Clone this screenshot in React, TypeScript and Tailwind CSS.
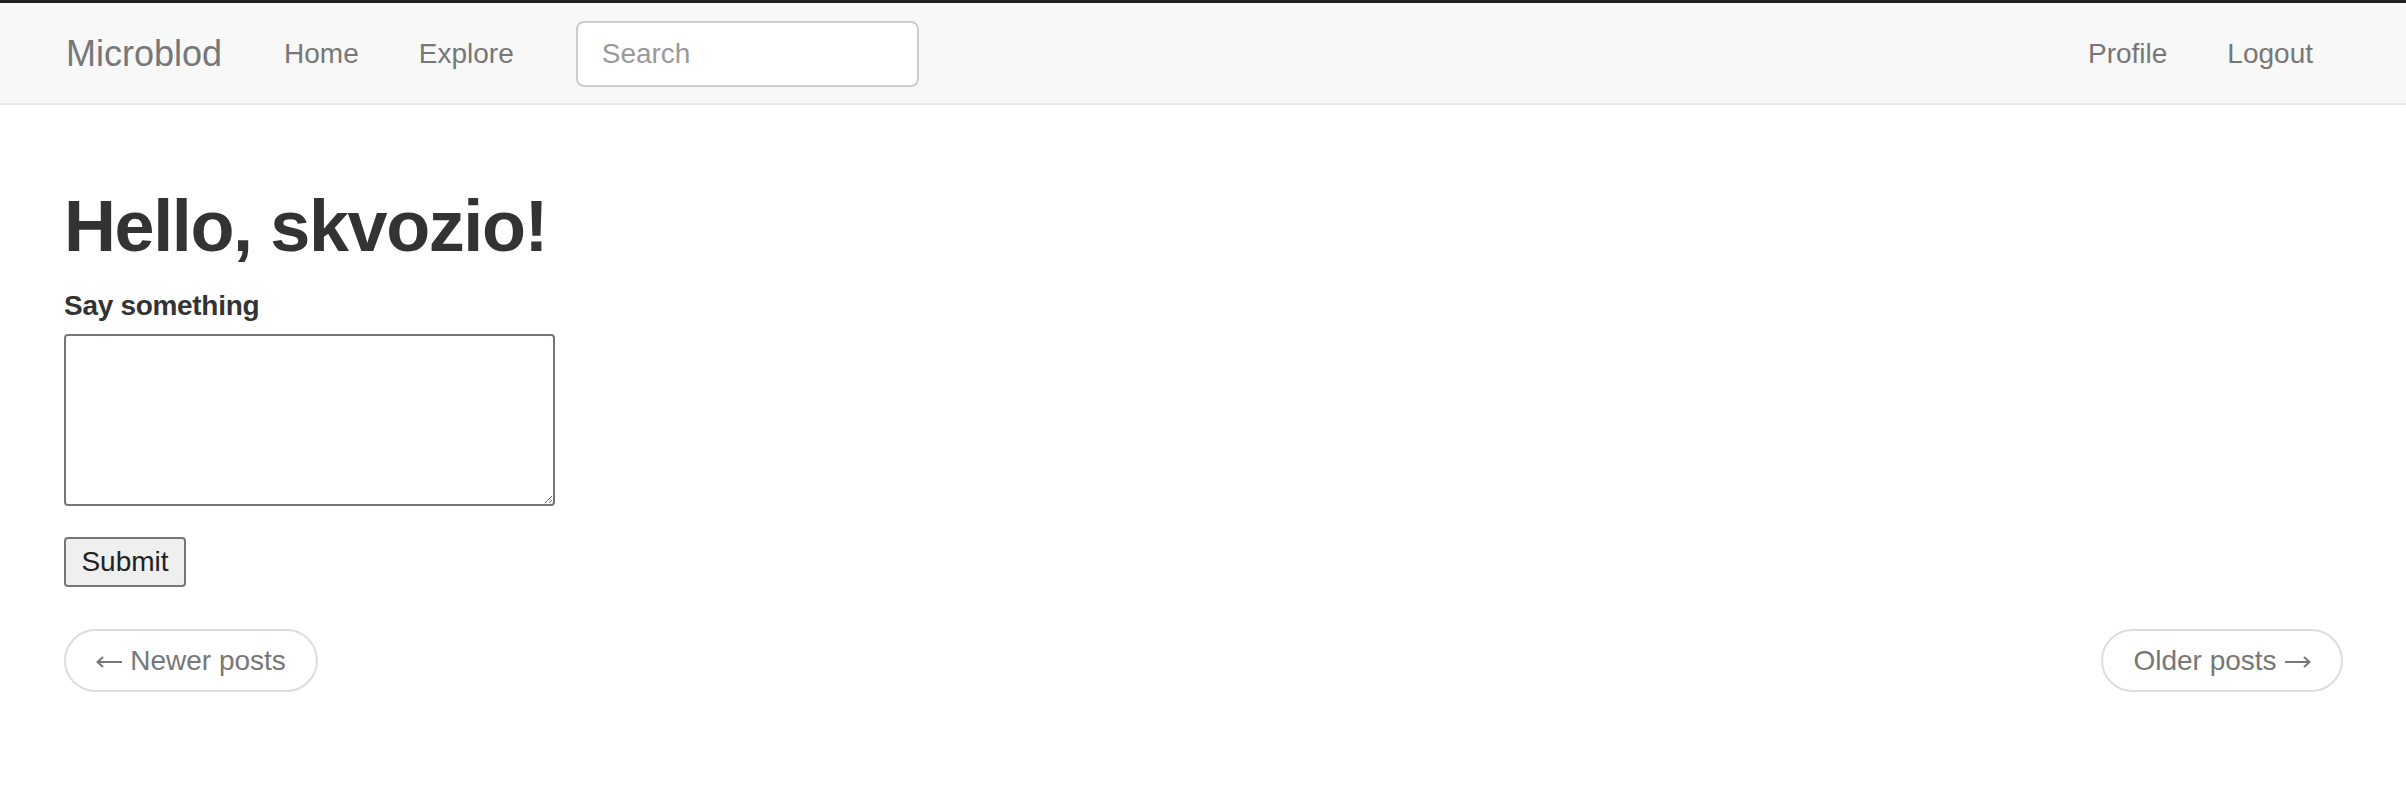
import React from "react"

const font = "font-['Liberation_Sans','Helvetica_Neue',Arial,sans-serif]"

const NavLink = ({ label }: { label: string }) => (
  <a href="#" className="px-[30px] text-[28px] leading-[40px] text-[#777]">
    {label}
  </a>
)

// thin long arrow, like the system glyph in the screenshot
const Arrow = ({ dir }: { dir: "left" | "right" }) => (
  <svg
    width="27"
    height="12"
    viewBox="0 0 27 12"
    className={`mt-[3px] shrink-0 ${dir === "right" ? "rotate-180" : ""}`}
    fill="none"
    stroke="#777"
    strokeWidth="2"
  >
    <path d="M1.5 6H26" />
    <path d="M7 1L1.5 6L7 11" strokeLinejoin="miter" />
  </svg>
)

export default function App() {
  return (
    <div className={`min-h-[794px] bg-white ${font}`}>
      <div className="h-[3px] bg-[#222]" />
      <nav className="flex h-[102px] items-center justify-between border-b-2 border-[#e7e7e7] bg-[#f8f8f8] pl-[36px] pr-[63px] pt-[2px]">
        <div className="flex items-center">
          <a href="#" className="pl-[30px] pr-[32px] text-[36px] leading-[40px] text-[#777]">
            Microblod
          </a>
          <NavLink label="Home" />
          <NavLink label="Explore" />
          <form className="pl-[32px]">
            <input
              placeholder="Search"
              className="h-[66px] w-[343px] rounded-[8px] border-2 border-[#ccc] bg-white px-[24px] text-[28px] text-[#555] placeholder:text-[#999] outline-none"
            />
          </form>
        </div>
        <div className="flex items-center">
          <NavLink label="Profile" />
          <NavLink label="Logout" />
        </div>
      </nav>

      <main className="pl-[64px] pr-[63px]">
        <h1 className="mt-[82px] text-[72px] leading-[79px] font-bold tracking-[-1.4px] text-[#333]">
          Hello, skvozio!
        </h1>
        <form className="mt-[20px]">
          <label className="block text-[28px] leading-[40px] font-bold tracking-[-0.3px] text-[#333]">
            Say something
          </label>
          <textarea className="mt-[8px] block h-[172px] w-[491px] rounded-[4px] border-2 border-[#767676] bg-white" />
          <button
            type="button"
            className="mt-[31px] flex h-[50px] w-[122px] items-center justify-center rounded-[4px] border-2 border-[#767676] bg-[#efefef] text-[28px] text-[#222]"
          >
            Submit
          </button>
        </form>
        <div className="mt-[42px] flex justify-between">
          <a
            href="#"
            className="flex h-[63px] w-[254px] items-center justify-center gap-[7px] rounded-full border-2 border-[#ddd] text-[28px] text-[#777]"
          >
            <Arrow dir="left" />
            <span>Newer posts</span>
          </a>
          <a
            href="#"
            className="flex h-[63px] w-[242px] items-center justify-center gap-[7px] rounded-full border-2 border-[#ddd] text-[28px] text-[#777]"
          >
            <span>Older posts</span>
            <Arrow dir="right" />
          </a>
        </div>
      </main>
    </div>
  )
}
